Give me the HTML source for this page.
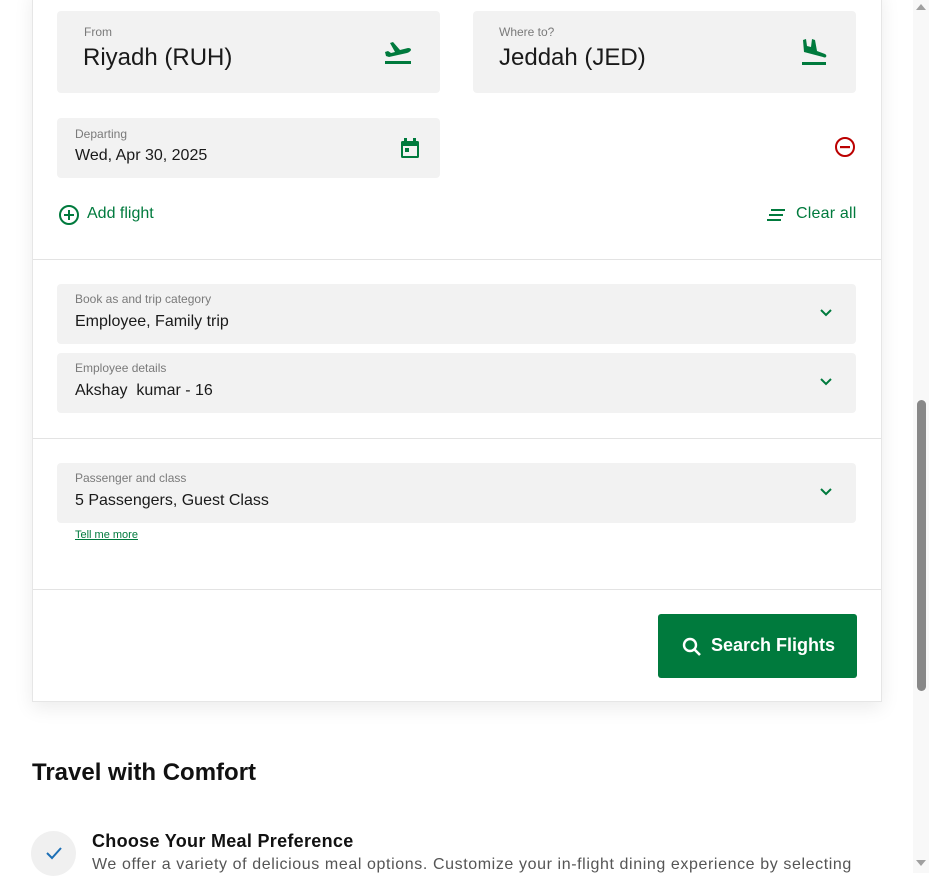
<!DOCTYPE html>
<html><head><meta charset="utf-8"><style>
*{box-sizing:border-box;margin:0;padding:0}
body{width:929px;height:873px;overflow:hidden;background:#fff;font-family:"Liberation Sans",sans-serif;color:#1a1a1a;position:relative}
.a{position:absolute}
.card{position:absolute;left:32px;top:-10px;width:850px;height:712px;background:#fff;border:1px solid #e6e6e6;box-shadow:0 6px 18px rgba(0,0,0,.08)}
.f{position:absolute;background:#f2f2f2;border-radius:4px}
.lbl{position:absolute;font-size:12px;color:#7a7a7a}
.val{position:absolute;font-size:16px;color:#1a1a1a}
.hr{position:absolute;left:33px;width:848px;height:1px;background:#e3e3e3}
.g{color:#007a3d}
</style></head><body>
<div class="card"></div>
<div class="f" style="left:57px;top:11px;width:383px;height:82px"></div>
<div class="lbl" style="left:84px;top:25px">From</div>
<div class="val" style="left:83px;top:44px;font-size:24px">Riyadh (RUH)</div>
<svg class="a" style="left:383px;top:40px" width="30" height="26" viewBox="0 0 30 26"><path d="M2 12 L5 11 L8 13 L12 12 L7 3 L10 2 L17 10 L25 8 Q28 8 28 10 Q27 12 24 13 L6 17 L3 16 Z" fill="#007a3d"/><rect x="2" y="21" width="26" height="3" fill="#007a3d"/></svg>
<div class="f" style="left:473px;top:11px;width:383px;height:82px"></div>
<div class="lbl" style="left:499px;top:25px">Where to?</div>
<div class="val" style="left:499px;top:44px;font-size:24px">Jeddah (JED)</div>
<svg class="a" style="left:801px;top:37px" width="26" height="30" viewBox="0 0 26 30"><path d="M2 3 L5 2 L6 9 L10 10 L11 2 L14 3 L16 14 L24 17 Q26 18 25 20 Q24 21 22 20 L3 15 Z" fill="#007a3d"/><rect x="1" y="25" width="24" height="3" fill="#007a3d"/></svg>
<div class="f" style="left:57px;top:118px;width:383px;height:60px"></div>
<div class="lbl" style="left:75px;top:127px">Departing</div>
<div class="val" style="left:75px;top:147px">Wed, Apr 30, 2025</div>
<svg class="a" style="left:400px;top:138px" width="20" height="22" viewBox="0 0 20 22"><rect x="1" y="3" width="18" height="17" rx="1.5" fill="#007a3d"/><rect x="4" y="0" width="3" height="5" fill="#007a3d"/><rect x="13" y="0" width="3" height="5" fill="#007a3d"/><rect x="3" y="8" width="14" height="10" fill="#f2f2f2"/><rect x="5" y="10" width="4" height="4" fill="#007a3d"/></svg>
<svg class="a" style="left:834px;top:136px" width="22" height="22" viewBox="0 0 22 22"><circle cx="11" cy="11" r="9" fill="none" stroke="#b00" stroke-width="2"/><rect x="6" y="10" width="10" height="2.2" fill="#b00"/></svg>
<svg class="a" style="left:58px;top:204px" width="22" height="22" viewBox="0 0 22 22"><circle cx="11" cy="11" r="9" fill="none" stroke="#007a3d" stroke-width="2"/><path d="M11 6V16M6 11H16" stroke="#007a3d" stroke-width="2"/></svg>
<div class="a g" style="left:87px;top:205px;font-size:16px">Add flight</div>
<svg class="a" style="left:766px;top:208px" width="20" height="14" viewBox="0 0 20 14"><path d="M5 2H19M3 7H17M1 12H15" stroke="#007a3d" stroke-width="2"/></svg>
<div class="a g" style="left:796px;top:205px;font-size:16px;letter-spacing:0.2px">Clear all</div>
<div class="hr" style="top:259px"></div>
<div class="f" style="left:57px;top:284px;width:799px;height:60px"></div>
<div class="lbl" style="left:75px;top:292px">Book as and trip category</div>
<div class="val" style="left:75px;top:313px">Employee, Family trip</div>
<svg class="a" style="left:819px;top:308px" width="14" height="10" viewBox="0 0 14 10"><path d="M2 2L7 7L12 2" fill="none" stroke="#007a3d" stroke-width="2"/></svg>
<div class="f" style="left:57px;top:353px;width:799px;height:60px"></div>
<div class="lbl" style="left:75px;top:361px">Employee details</div>
<div class="val" style="left:75px;top:382px;white-space:pre">Akshay  kumar - 16</div>
<svg class="a" style="left:819px;top:377px" width="14" height="10" viewBox="0 0 14 10"><path d="M2 2L7 7L12 2" fill="none" stroke="#007a3d" stroke-width="2"/></svg>
<div class="hr" style="top:438px"></div>
<div class="f" style="left:57px;top:463px;width:799px;height:60px"></div>
<div class="lbl" style="left:75px;top:471px">Passenger and class</div>
<div class="val" style="left:75px;top:492px">5 Passengers, Guest Class</div>
<svg class="a" style="left:819px;top:487px" width="14" height="10" viewBox="0 0 14 10"><path d="M2 2L7 7L12 2" fill="none" stroke="#007a3d" stroke-width="2"/></svg>
<div class="a g" style="left:75px;top:529px;font-size:11px;text-decoration:underline">Tell me more</div>
<div class="hr" style="top:589px"></div>
<div class="a" style="left:658px;top:614px;width:199px;height:64px;background:#007a3d;border-radius:3px"></div>
<svg class="a" style="left:681px;top:636px" width="22" height="22" viewBox="0 0 22 22"><circle cx="9" cy="9" r="6" fill="none" stroke="#fff" stroke-width="2.4"/><path d="M13.5 13.5L19 19" stroke="#fff" stroke-width="2.6"/></svg>
<div class="a" style="left:711px;top:635px;font-size:18px;font-weight:bold;color:#fff">Search Flights</div>
<div class="a" style="left:32px;top:759px;font-size:24px;font-weight:bold;color:#111">Travel with Comfort</div>
<div class="a" style="left:31px;top:831px;width:45px;height:45px;border-radius:50%;background:#f0f0f0"></div>
<svg class="a" style="left:45px;top:845px" width="18" height="16" viewBox="0 0 18 16"><path d="M2 8L7 13L16 3" fill="none" stroke="#1c6fb5" stroke-width="2"/></svg>
<div class="a" style="left:92px;top:831px;font-size:18px;font-weight:bold;color:#111;letter-spacing:0.3px">Choose Your Meal Preference</div>
<div class="a" style="left:92px;top:856px;font-size:16px;color:#555;white-space:nowrap;letter-spacing:0.6px">We offer a variety of delicious meal options. Customize your in-flight dining experience by selecting</div>
<div class="a" style="left:913px;top:0;width:16px;height:873px;background:#f8f8f8"></div>
<div class="a" style="left:917px;top:400px;width:9px;height:291px;background:#888;border-radius:5px"></div>
<div class="a" style="left:916px;top:4px;width:0;height:0;border-left:5px solid transparent;border-right:5px solid transparent;border-bottom:6px solid #a0a0a0"></div>
<div class="a" style="left:916px;top:860px;width:0;height:0;border-left:5px solid transparent;border-right:5px solid transparent;border-top:6px solid #a0a0a0"></div>
</body></html>
